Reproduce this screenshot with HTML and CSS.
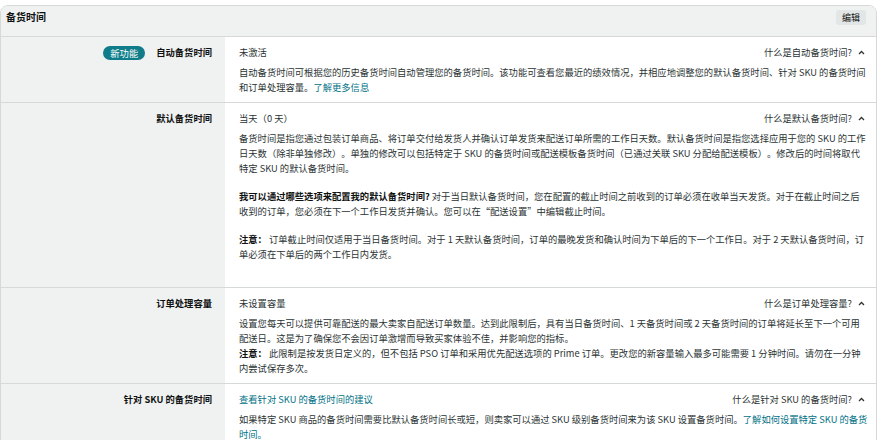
FILE: index.html
```html
<!DOCTYPE html>
<html>
<head>
  <link rel="stylesheet" href="styles.css">
</head>
<body>
  <div class="card">
    <div class="card-header">
      <h2 class="title">备货时间</h2>
      <button class="edit-btn">编辑</button>
    </div>

    <div class="row">
      <div class="label">
        <span class="badge">新功能</span>
        <span class="label-text">自动备货时间</span>
      </div>
      <div class="content">
        <div class="content-head">
          <span>未激活</span>
          <span class="help">什么是自动备货时间?
            <svg class="chev" width="7" height="5" viewBox="0 0 7 5"><polyline points="1,4 3.5,1.5 6,4"/></svg>
          </span>
        </div>
        <p>自动备货时间可根据您的历史备货时间自动管理您的备货时间。该功能可查看您最近的绩效情况，并相应地调整您的默认备货时间、针对 SKU 的备货时间和订单处理容量。<a href="#">了解更多信息</a></p>
      </div>
    </div>

    <div class="row">
      <div class="label">
        <span class="label-text">默认备货时间</span>
      </div>
      <div class="content content-tall">
        <div class="content-head">
          <span>当天（0 天）</span>
          <span class="help">什么是默认备货时间?
            <svg class="chev" width="7" height="5" viewBox="0 0 7 5"><polyline points="1,4 3.5,1.5 6,4"/></svg>
          </span>
        </div>
        <p>备货时间是指您通过包装订单商品、将订单交付给发货人并确认订单发货来配送订单所需的工作日天数。默认备货时间是指您选择应用于您的 SKU 的工作日天数（除非单独修改）。单独的修改可以包括特定于 SKU 的备货时间或配送模板备货时间（已通过关联 SKU 分配给配送模板）。修改后的时间将取代特定 SKU 的默认备货时间。</p>
        <p class="spaced"><b>我可以通过哪些选项来配置我的默认备货时间?</b> 对于当日默认备货时间，您在配置的截止时间之前收到的订单必须在收单当天发货。对于在截止时间之后收到的订单，您必须在下一个工作日发货并确认。您可以在“配送设置”中编辑截止时间。</p>
        <p class="spaced"><b>注意：</b> 订单截止时间仅适用于当日备货时间。对于 1 天默认备货时间，订单的最晚发货和确认时间为下单后的下一个工作日。对于 2 天默认备货时间，订单必须在下单后的两个工作日内发货。</p>
      </div>
    </div>

    <div class="row">
      <div class="label">
        <span class="label-text">订单处理容量</span>
      </div>
      <div class="content">
        <div class="content-head">
          <span>未设置容量</span>
          <span class="help">什么是订单处理容量?
            <svg class="chev" width="7" height="5" viewBox="0 0 7 5"><polyline points="1,4 3.5,1.5 6,4"/></svg>
          </span>
        </div>
        <p>设置您每天可以提供可靠配送的最大卖家自配送订单数量。达到此限制后，具有当日备货时间、1 天备货时间或 2 天备货时间的订单将延长至下一个可用配送日。这是为了确保您不会因订单激增而导致买家体验不佳，并影响您的指标。</p>
        <p><b>注意：</b> 此限制是按发货日定义的，但不包括 PSO 订单和采用优先配送选项的 Prime 订单。更改您的新容量输入最多可能需要 1 分钟时间。请勿在一分钟内尝试保存多次。</p>
      </div>
    </div>

    <div class="row">
      <div class="label">
        <span class="label-text">针对 SKU 的备货时间</span>
      </div>
      <div class="content">
        <div class="content-head">
          <a href="#">查看针对 SKU 的备货时间的建议</a>
          <span class="help">什么是针对 SKU 的备货时间?
            <svg class="chev" width="7" height="5" viewBox="0 0 7 5"><polyline points="1,4 3.5,1.5 6,4"/></svg>
          </span>
        </div>
        <p>如果特定 SKU 商品的备货时间需要比默认备货时间长或短，则卖家可以通过 SKU 级别备货时间来为该 SKU 设置备货时间。<a href="#">了解如何设置特定 SKU 的备货时间。</a></p>
      </div>
    </div>
  </div>
</body>
</html>
```

FILE: styles.css
```css
:root {
  --text: #0f1111;
  --muted: #2b3333;
  --line: #d5d9d9;
  --panel: #f0f2f2;
  --link: #007185;
}

* {
  margin: 0;
  padding: 0;
  box-sizing: border-box;
}

body {
  background: #fff;
  color: var(--text);
  font-family: "Noto Sans CJK SC", "Noto Sans", sans-serif;
  font-size: 9.3px;
  line-height: 15px;
  text-spacing-trim: space-all;
  padding-top: 5px;
}

.card {
  width: 877px;
  height: 445px;
  border: 1px solid var(--line);
  border-radius: 8px;
  overflow: hidden;
}

.card-header {
  background: var(--panel);
  display: flex;
  justify-content: space-between;
  align-items: flex-start;
  padding: 3px 10px 11px 5px;
  border-bottom: 1px solid var(--line);
}

.title {
  font-size: 10px;
  font-weight: 700;
  line-height: 15px;
}

.edit-btn {
  font-family: inherit;
  font-size: 9px;
  line-height: 13px;
  color: var(--text);
  background: #e3e6e6;
  border: none;
  border-radius: 3px;
  padding: 1px 6px;
  margin-top: 1px;
}

.row {
  display: grid;
  grid-template-columns: 224px 1fr;
  border-bottom: 1px solid var(--line);
}

.label {
  background: var(--panel);
  display: flex;
  justify-content: flex-end;
  align-items: flex-start;
  gap: 11px;
  padding: 8px 13px;
}

.label-text {
  font-weight: 700;
}

.badge {
  background: #0f7d89;
  color: #fff;
  border-radius: 8px;
  padding: 0 7px;
  line-height: 14px;
  margin-top: 1px;
}

.content {
  padding: 8px 8px 7px 14px;
  color: var(--muted);
}

.content-tall {
  padding-bottom: 25px;
}

.content-head {
  display: flex;
  justify-content: space-between;
  align-items: center;
  margin-bottom: 5px;
  padding-right: 3px;
}

.help {
  display: flex;
  align-items: center;
  gap: 6px;
}

.chev {
  fill: none;
  stroke: #333;
  stroke-width: 1.3;
}

.spaced {
  margin-top: 13px;
}

b {
  color: var(--text);
}

a {
  color: var(--link);
  text-decoration: none;
}
```
